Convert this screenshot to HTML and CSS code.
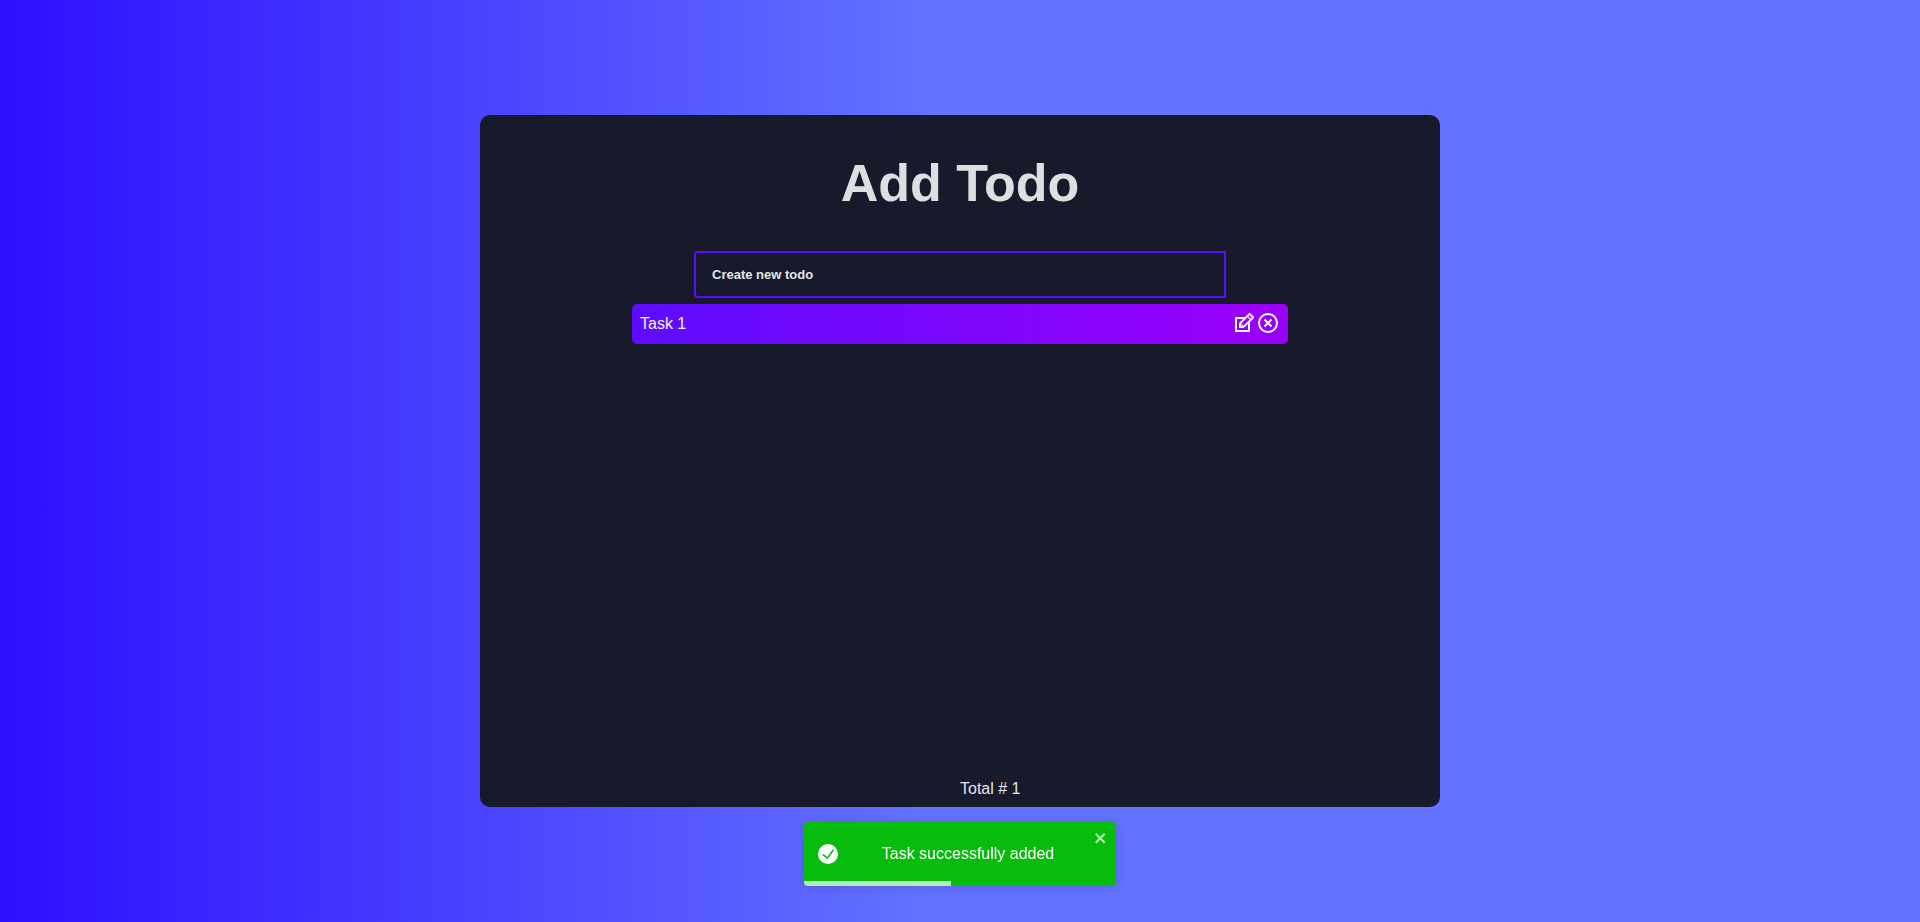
FILE: index.html
```
<!DOCTYPE html>
<html lang="en">
<head>
<meta charset="utf-8">
<title>Add Todo</title>
<link rel="stylesheet" href="styles.css">
</head>
<body>
<main class="card">
  <h1 class="title">Add Todo</h1>
  <form class="form"><input class="field" type="text" placeholder="Create new todo" aria-label="Create new todo"></form>
  <ul class="list">
    <li class="task">
      <span class="task-name">Task 1</span>
      <span class="actions">
        <button class="icon-button" type="button" aria-label="Edit"><svg viewBox="0 0 24 24" fill="currentColor"><path d="M21.561 5.318l-2.879-2.879c-.293-.293-.677-.439-1.061-.439-.385 0-.768.146-1.061.439l-3.560 3.561h-9c-.552 0-1 .447-1 1v13c0 .553.448 1 1 1h13c.552 0 1-.447 1-1v-9l3.561-3.561c.293-.293.439-.677.439-1.061s-.146-.767-.439-1.060zm-10.061 9.354l-2.172-2.172 6.293-6.293 2.172 2.172-6.293 6.293zm-2.561-1.339l1.756 1.728-1.695-.061-.061-1.667zm7.061 5.667h-11v-11h6l-3.180 3.180c-.293.293-.478.812-.629 1.289-.160.500-.191 1.056-.191 1.470v3.061h3.061c.414 0 1.108-.1 1.571-.290.464-.190.896-.347 1.188-.640l3.180-3.070v6zm2.500-11.328l-2.172-2.172 1.293-1.293 2.171 2.172-1.292 1.293z"/></svg></button>
        <button class="icon-button" type="button" aria-label="Delete"><svg viewBox="0 0 24 24" fill="none" stroke="currentColor" stroke-width="2"><circle cx="12" cy="12" r="9"/><path d="M8.500 8.500l7 7m0-7l-7 7"/></svg></button>
      </span>
    </li>
  </ul>
  <p class="total">Total # 1</p>
</main>
<div class="toast" role="alert">
  <svg class="toast-icon" viewBox="0 0 24 24" fill="currentColor"><path d="M12 0a12 12 0 1012 12A12.014 12.014 0 0012 0zm6.927 8.200l-6.845 9.289a1.011 1.011 0 01-1.430.188l-4.888-3.908a1 1 0 111.250-1.562l4.076 3.261 6.227-8.451a1 1 0 111.610 1.183z"/></svg>
  <span class="toast-text">Task successfully added</span>
  <button class="toast-close" type="button" aria-label="Close"><svg viewBox="0 0 14 16" fill="currentColor"><path fill-rule="evenodd" d="M7.710 8.230l3.750 3.750-1.480 1.480-3.750-3.750-3.750 3.750L1 11.980l3.750-3.750L1 4.480 2.480 3l3.750 3.750L9.980 3l1.480 1.480-3.750 3.750z"/></svg></button>
  <div class="progress"></div>
</div>
</body>
</html>
```
FILE: styles.css
```
* { box-sizing: border-box; }
body { margin: 0; min-height: 100vh; display: flex; align-items: center; justify-content: center; font-family: "Liberation Sans", Arial, sans-serif; font-size: 16px; background: linear-gradient(90deg, #2e0fff 0%, #6372ff 48%); }
.card { width: 50%; height: 75vh; display: flex; flex-direction: column; align-items: center; background: #161a2b; border-radius: 10px; }
.title { margin: 40px 0; font-size: 52px; line-height: 56px; color: #dedfe1; }
.form { width: 100%; display: flex; justify-content: center; }
.field { width: 532px; height: 47px; padding: 0 16px; border: 2px solid #5d0cff; border-radius: 4px 0 0 4px; background: transparent; color: #fff; font: bold 13px "Liberation Sans", Arial, sans-serif; }
.field::placeholder { color: #e5e5e5; opacity: 1; }
.list { width: 656px; margin: 6px 0 0; padding: 0; list-style: none; }
.task { height: 40px; padding: 0 8px; display: flex; align-items: center; justify-content: space-between; border-radius: 5px; color: #f0f0f5; background: linear-gradient(90deg, #5d0cff, #9b00fa); }
.actions { display: flex; margin-bottom: 2px; color: #fff; }
.icon-button { width: 24px; height: 24px; padding: 0; border: 0; background: none; color: inherit; }
.icon-button svg { display: block; }
.total { width: 100%; margin: auto 0 8px; padding-left: 50%; line-height: 20px; color: #e6e6ea; }
.toast { position: fixed; left: 50%; bottom: 36px; width: 312px; height: 64px; margin-left: -156px; display: flex; align-items: center; padding: 8px 8px 8px 14px; border-radius: 4px; overflow: hidden; background: #07bc0c; color: #fff; box-shadow: 0 1px 10px rgba(0,0,0,.1), 0 2px 15px rgba(0,0,0,.05); }
.toast-icon { width: 20px; }
.toast-text { flex: 1; padding-left: 4px; text-align: center; }
.toast-close { align-self: flex-start; width: 14px; height: 16px; padding: 0; border: 0; background: none; color: #fff; opacity: .7; }
.toast-close svg { display: block; }
.progress { position: absolute; left: 0; bottom: 0; width: 47%; height: 5px; background: rgba(255,255,255,.7); }
```
